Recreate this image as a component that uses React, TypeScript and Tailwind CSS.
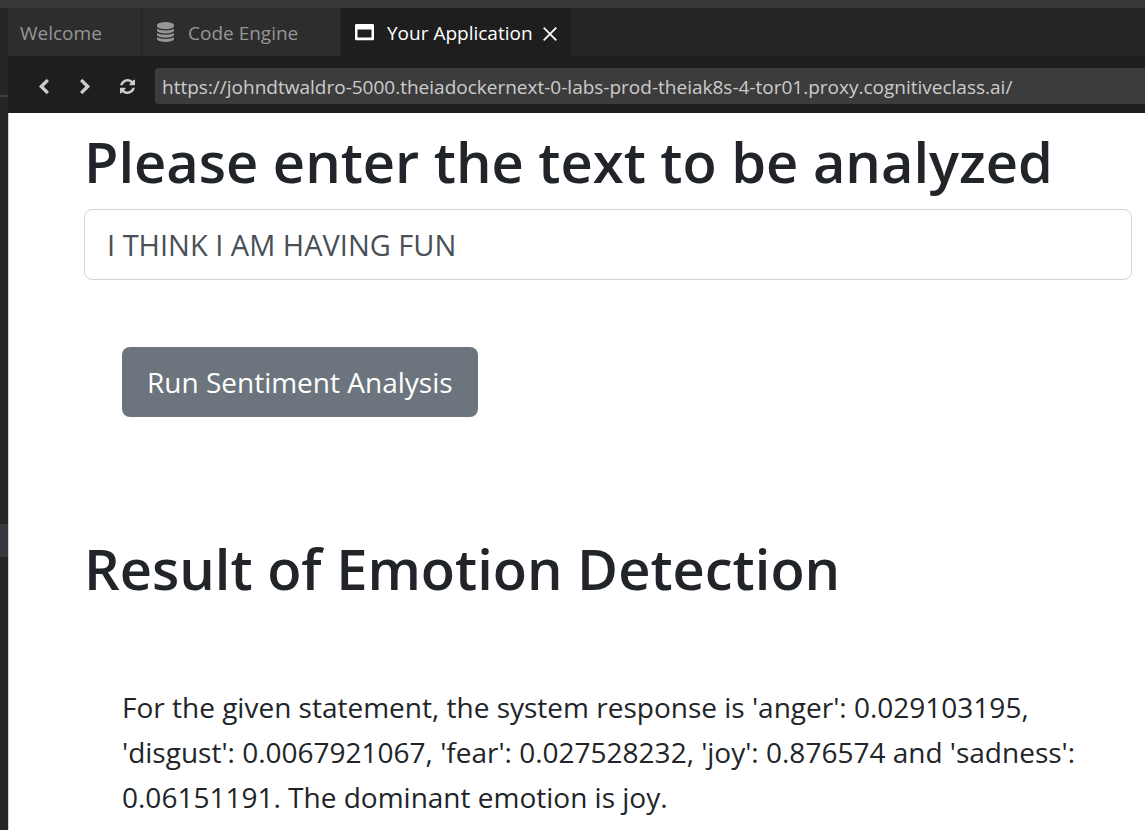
import { useState } from "react";

function DatabaseIcon() {
  return (
    <svg viewBox="64 0 1536 1792" className="h-5 w-[17px]" fill="currentColor" aria-hidden="true">
      <path d="M832 768q237 0 443-43t325-127v170q0 69-103 128t-280 93.5-385 34.5-385-34.5-280-93.5-103-128v-170q119 84 325 127t443 43zm0 768q237 0 443-43t325-127v170q0 69-103 128t-280 93.5-385 34.5-385-34.5-280-93.5-103-128v-170q119 84 325 127t443 43zm0-384q237 0 443-43t325-127v170q0 69-103 128t-280 93.5-385 34.5-385-34.5-280-93.5-103-128v-170q119 84 325 127t443 43zm0-1152q208 0 385 34.5t280 93.5 103 128v128q0 69-103 128t-280 93.5-385 34.5-385-34.5-280-93.5-103-128v-128q0-69 103-128t280-93.5 385-34.5z" />
    </svg>
  );
}

function WindowIcon() {
  return (
    <svg viewBox="0 0 19 17" className="h-[17px] w-[19px]" fill="currentColor" aria-hidden="true">
      <path fillRule="evenodd" d="M1.2 0h16.600a1.2 1.2 0 0 1 1.2 1.2v13.800a1.2 1.2 0 0 1-1.2 1.2h-16.600a1.2 1.2 0 0 1-1.2-1.2V1.2A1.2 1.2 0 0 1 1.2 0zM2.500 5.500v8h14v-8z" />
    </svg>
  );
}

function CloseIcon() {
  return (
    <svg viewBox="0 0 14 14" className="h-3.5 w-3.5" fill="none" stroke="currentColor" strokeWidth="1.8" aria-hidden="true">
      <path d="M0.7 0.7l12.6 12.6M13.3 0.7L0.7 13.3" />
    </svg>
  );
}

function ChevronIcon({ right = false }: { right?: boolean }) {
  return (
    <svg viewBox="410 26 1036 1612" className="h-[15px] w-[10px]" fill="currentColor" aria-hidden="true">
      <path
        transform={right ? "translate(1856 0) scale(-1 1)" : undefined}
        d="M1427 301l-531 531 531 531q19 19 19 45t-19 45l-166 166q-19 19-45 19t-45-19l-742-742q-19-19-19-45t19-45l742-742q19-19 45-19t45 19l166 166q19 19 19 45t-19 45z"
      />
    </svg>
  );
}

function RefreshIcon() {
  return (
    <svg viewBox="0 0 1536 1536" className="h-[15px] w-[15px]" fill="currentColor" aria-hidden="true">
      <path d="M1511 928q0 5-1 7-64 268-268 434.500t-478 166.500q-146 0-282.500-55t-243.500-157l-129 129q-19 19-45 19t-45-19-19-45v-448q0-26 19-45t45-19h448q26 0 45 19t19 45-19 45l-137 137q71 66 161 102t187 36q134 0 250-65t186-179q11-17 53-117 8-23 30-23h192q13 0 22.500 9.500t9.500 22.500zm25-800v448q0 26-19 45t-45 19h-448q-26 0-45-19t-19-45 19-45l138-138q-148-137-349-137-134 0-250 65t-186 179q-11 17-53 117-8 23-30 23h-199q-13 0-22.500-9.500t-9.500-22.500v-7q65-268 270-434.500t480-166.500q146 0 284 55.500t245 156.500l130-129q19-19 45-19t45 19 19 45z" />
    </svg>
  );
}

function SideRail() {
  return (
    <div className="flex w-2 shrink-0 flex-col bg-[#252526]">
      <div className="h-[89px] border-b-2 border-[#414141]" />
      <div className="h-[427px]" />
      <div className="h-[33px] bg-[#37373d]" />
    </div>
  );
}

function TabBar() {
  return (
    <div role="tablist" className="flex h-12 bg-[#252526] text-[19px] text-[#969696]">
      <button role="tab" aria-selected="false" className="flex w-[134px] items-center border-r border-[#252526] bg-[#2d2d2d] pl-3">
        <span className="pt-0.5">Welcome</span>
      </button>
      <button role="tab" aria-selected="false" className="flex w-[199px] items-center gap-[14px] border-r border-[#252526] bg-[#2d2d2d] pl-[15px]">
        <DatabaseIcon />
        <span className="pt-0.5">Code Engine</span>
      </button>
      <div className="flex w-[230px] items-center bg-[#1e1e1e] text-white">
        <button role="tab" aria-selected="true" className="flex h-full items-center gap-[13px] pl-[14px]">
          <WindowIcon />
          <span className="pt-0.5">Your Application</span>
        </button>
        <button aria-label="Close tab" className="mr-[14px] ml-auto pt-1">
          <CloseIcon />
        </button>
      </div>
    </div>
  );
}

function AddressBar() {
  const [url, setUrl] = useState(
    "https://johndtwaldro-5000.theiadockernext-0-labs-prod-theiak8s-4-tor01.proxy.cognitiveclass.ai/",
  );
  return (
    <div className="flex items-center bg-[#1e1e1e] pt-3 pb-[9px] text-[#cccccc]">
      <div className="flex w-[147px] shrink-0 items-center pl-[31px]">
        <button aria-label="Back" className="mr-[31px]">
          <ChevronIcon />
        </button>
        <button aria-label="Forward" className="mr-[30px]">
          <ChevronIcon right />
        </button>
        <button aria-label="Reload">
          <RefreshIcon />
        </button>
      </div>
      <input
        aria-label="Address"
        value={url}
        onChange={(e) => setUrl(e.target.value)}
        className="h-9 min-w-0 flex-1 rounded-l-[3px] bg-[#3c3c3c] px-[7px] pt-0.5 text-[19px] outline-none"
      />
    </div>
  );
}

export default function App() {
  const [text, setText] = useState("I THINK I AM HAVING FUN");
  return (
    <div className="flex min-h-screen flex-col bg-[#252526] font-['Open_Sans','Noto_Sans',sans-serif]">
      <div className="h-2 bg-[#383838]" />
      <div className="flex flex-1">
        <SideRail />
        <div className="flex min-w-0 flex-1 flex-col">
          <TabBar />
          <AddressBar />
          <main className="flex-1 border-l border-[#d0d0d0] bg-white pr-[13px] pb-2 pl-[75px] text-[#212529]">
            <h1 className="pt-3 text-[56px] leading-[72px] font-semibold">
              <label htmlFor="analysis-text">Please enter the text to be analyzed</label>
            </h1>
            <input
              id="analysis-text"
              value={text}
              onChange={(e) => setText(e.target.value)}
              className="mt-3 block h-[71px] w-full rounded-lg border border-[#ced4da] bg-white px-[22px] text-[29px] text-[#495057] outline-none"
            />
            <div className="px-[38px] pt-[67px]">
              <button className="h-[70px] rounded-lg bg-[#6c757d] px-[25px] text-[28px] text-white">
                Run Sentiment Analysis
              </button>
            </div>
            <h2 className="mt-[115px] text-[56px] leading-[72px] font-semibold">Result of Emotion Detection</h2>
            <p className="px-[38px] pt-[81px] text-[28px] leading-[45px]">
              For the given statement, the system response is 'anger': 0.029103195, 'disgust': 0.0067921067, 'fear':
              0.027528232, 'joy': 0.876574 and 'sadness': 0.06151191. The dominant emotion is joy.
            </p>
          </main>
        </div>
      </div>
    </div>
  );
}
